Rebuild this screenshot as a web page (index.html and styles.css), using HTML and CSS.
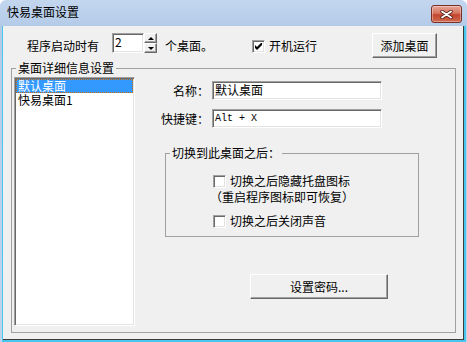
FILE: index.html
```html
<!DOCTYPE html>
<html>
<head>
  <meta charset="UTF-8">
  <title>快易桌面设置</title>
  <link rel="stylesheet" href="styles.css">
</head>
<body>
  <div class="window">
    <div class="titlebar">
      <span class="title">快易桌面设置</span>
      <button class="close-btn">
        <svg width="13" height="9" viewBox="0 0 13 9">
          <path d="M2 1.5 L11 7.5 M11 1.5 L2 7.5" stroke="#5a2018" stroke-width="3.4" stroke-linecap="round"/>
          <path d="M2 1.5 L11 7.5 M11 1.5 L2 7.5" stroke="#fff" stroke-width="1.8" stroke-linecap="round"/>
        </svg>
      </button>
    </div>

    <div class="frame">
      <div class="frame-edge">
        <div class="client">
          <!-- Startup options -->
          <div class="top-row">
            <span class="startup-label">程序启动时有</span>
            <div class="spin-edit edit">2</div>
            <div class="spin-buttons">
              <span class="spin-btn up"></span>
              <span class="spin-btn down"></span>
            </div>
            <span class="count-label">个桌面。</span>
            <label class="check autorun">
              <span class="check-box">
                <svg width="7" height="7" viewBox="0 0 7 7">
                  <path d="M0 2 L2 4 L7 -1 L7 2 L2 7 L0 5 Z" fill="#000"/>
                </svg>
              </span>
              <span>开机运行</span>
            </label>
            <button class="btn add-btn">添加桌面</button>
          </div>

          <!-- Desktop details -->
          <fieldset class="group main-group">
            <legend>桌面详细信息设置</legend>
            <div class="group-body">
              <ul class="listbox">
                <li class="selected">默认桌面</li>
                <li>快易桌面1</li>
              </ul>
              <div class="details">
                <div class="field-row">
                  <span class="field-label">名称：</span>
                  <div class="edit field-edit">默认桌面</div>
                </div>
                <div class="field-row">
                  <span class="field-label">快捷键：</span>
                  <div class="edit field-edit mono">Alt + X</div>
                </div>

                <fieldset class="group switch-group">
                  <legend>切换到此桌面之后：</legend>
                  <div class="switch-body">
                    <label class="check">
                      <span class="check-box"></span>
                      <span>切换之后隐藏托盘图标</span>
                    </label>
                    <div class="check-note">（重启程序图标即可恢复）</div>
                    <label class="check mute">
                      <span class="check-box"></span>
                      <span>切换之后关闭声音</span>
                    </label>
                  </div>
                </fieldset>

                <button class="btn password-btn">设置密码...</button>
              </div>
            </div>
          </fieldset>
        </div>
      </div>
    </div>
  </div>
</body>
</html>
```

FILE: styles.css
```css
* {
  box-sizing: border-box;
}

body {
  margin: 0;
  background: #fff;
  font-family: "Noto Sans CJK SC", "Noto Sans", sans-serif;
  font-size: 12px;
  line-height: 14px;
  color: #000;
}

.window {
  width: 467px;
  height: 342px;
  display: flex;
  flex-direction: column;
  background: linear-gradient(#c3d6ee, #b4cbe8 26px, #bfd3ec);
  border-radius: 6px 6px 0 0;
  overflow: hidden;
}

.titlebar {
  height: 26px;
  flex: none;
  display: flex;
  justify-content: space-between;
  align-items: flex-start;
  padding: 0 5px 0 7px;
}

.title {
  margin-top: 5px;
}

.close-btn {
  width: 31px;
  height: 18px;
  margin-top: 5px;
  padding: 0;
  border: 1px solid #7a2f26;
  border-radius: 3px;
  background: linear-gradient(#e6a597, #d5765f 45%, #c2452f 55%, #cf6a4e);
  box-shadow: inset 0 0 0 1px rgba(255, 255, 255, 0.35);
  display: flex;
  align-items: center;
  justify-content: center;
}

.frame {
  flex: 1;
  display: flex;
  padding: 0 1px 0 2px;
}

.frame-edge {
  flex: 1;
  display: flex;
  border-left: 1px solid #49c6ee;
  border-right: 2px solid #49c6ee;
  border-bottom: 2px solid #49c6ee;
}

.client {
  flex: 1;
  background: #f0f0f0;
  border-right: 1px solid #3c3c3c;
  border-bottom: 1px solid #3c3c3c;
}

/* Top row */
.top-row {
  display: flex;
  align-items: flex-start;
  height: 32px;
  padding-top: 6px;
}

.startup-label {
  margin: 7px 0 0 24px;
}

.edit {
  background: #fff;
  border: 1px solid;
  border-color: #a0a0a0 #fff #fff #a0a0a0;
  box-shadow: inset 1px 1px 0 #696969, inset -1px -1px 0 #e3e3e3;
  padding: 1px 2px 0;
  white-space: nowrap;
}

.spin-edit {
  width: 32px;
  height: 20px;
  margin: 1px 0 0 13px;
}

.spin-buttons {
  width: 13px;
  height: 20px;
  margin-top: 1px;
  display: flex;
  flex-direction: column;
}

.spin-btn {
  flex: 1;
  display: flex;
  align-items: center;
  justify-content: center;
  background: #f0f0f0;
  border: 1px solid;
  border-color: #fff #696969 #696969 #fff;
  box-shadow: inset -1px -1px 0 #a0a0a0;
}

.spin-btn::before {
  content: "";
  border-left: 3px solid transparent;
  border-right: 3px solid transparent;
}

.spin-btn.up::before {
  border-bottom: 3px solid #000;
}

.spin-btn.down::before {
  border-top: 3px solid #000;
}

.count-label {
  margin: 7px 0 0 8px;
}

.check {
  display: flex;
  align-items: center;
  gap: 4px;
}

.check-box {
  width: 13px;
  height: 13px;
  flex: none;
  background: #fff;
  border: 1px solid;
  border-color: #a0a0a0 #fff #fff #a0a0a0;
  box-shadow: inset 1px 1px 0 #696969, inset -1px -1px 0 #e3e3e3;
  display: flex;
  align-items: center;
  justify-content: center;
}

.autorun {
  margin: 7px 0 0 39px;
}

.btn {
  font: inherit;
  color: #000;
  background: #f0f0f0;
  border: 1px solid;
  border-color: #fff #696969 #696969 #fff;
  box-shadow: inset -1px -1px 0 #a0a0a0;
  padding: 0;
}

.add-btn {
  width: 65px;
  height: 25px;
  margin: 1px 0 0 55px;
}

/* Group boxes */
.group {
  margin: 0;
  padding: 0;
  min-width: 0;
  border: 1px solid #a0a0a0;
}

.group legend {
  margin-left: 4px;
  padding: 0 2px;
  line-height: 14px;
}

.main-group {
  width: 445px;
  height: 272px;
  margin: 3px 0 0 8px;
}

.group-body {
  display: flex;
  align-items: flex-start;
  padding: 2px 0 0 2px;
}

.listbox {
  width: 121px;
  height: 249px;
  margin: 0;
  padding: 1px 0 0;
  list-style: none;
  background: #fff;
  border: 1px solid;
  border-color: #a0a0a0 #fff #fff #a0a0a0;
  box-shadow: inset 1px 1px 0 #696969, inset -1px -1px 0 #e3e3e3;
}

.listbox li {
  height: 14px;
  line-height: 14px;
  margin: 0 1px;
  padding-left: 2px;
}

.listbox li.selected {
  background: #3399ff;
  color: #fff;
  outline: 1px dotted #cc6600;
  outline-offset: -1px;
}

.details {
  display: flex;
  flex-direction: column;
  align-items: flex-start;
  padding-top: 4px;
}

.field-row {
  display: flex;
  align-items: center;
  gap: 3px;
  height: 19px;
}

.field-row + .field-row {
  margin-top: 9px;
}

.field-label {
  width: 74px;
  text-align: right;
}

.field-edit {
  width: 170px;
  height: 19px;
}

.mono {
  font-family: "Liberation Mono", monospace;
  font-size: 10px;
  padding-top: 2px;
}

.switch-group {
  width: 254px;
  height: 91px;
  margin: 18px 0 0 30px;
}

.switch-body {
  padding: 14px 0 0 47px;
}

.check-note {
  margin: 2px 0 0 -3px;
}

.mute {
  margin-top: 10px;
}

.password-btn {
  width: 138px;
  height: 25px;
  margin: 37px 0 0 115px;
}
```
